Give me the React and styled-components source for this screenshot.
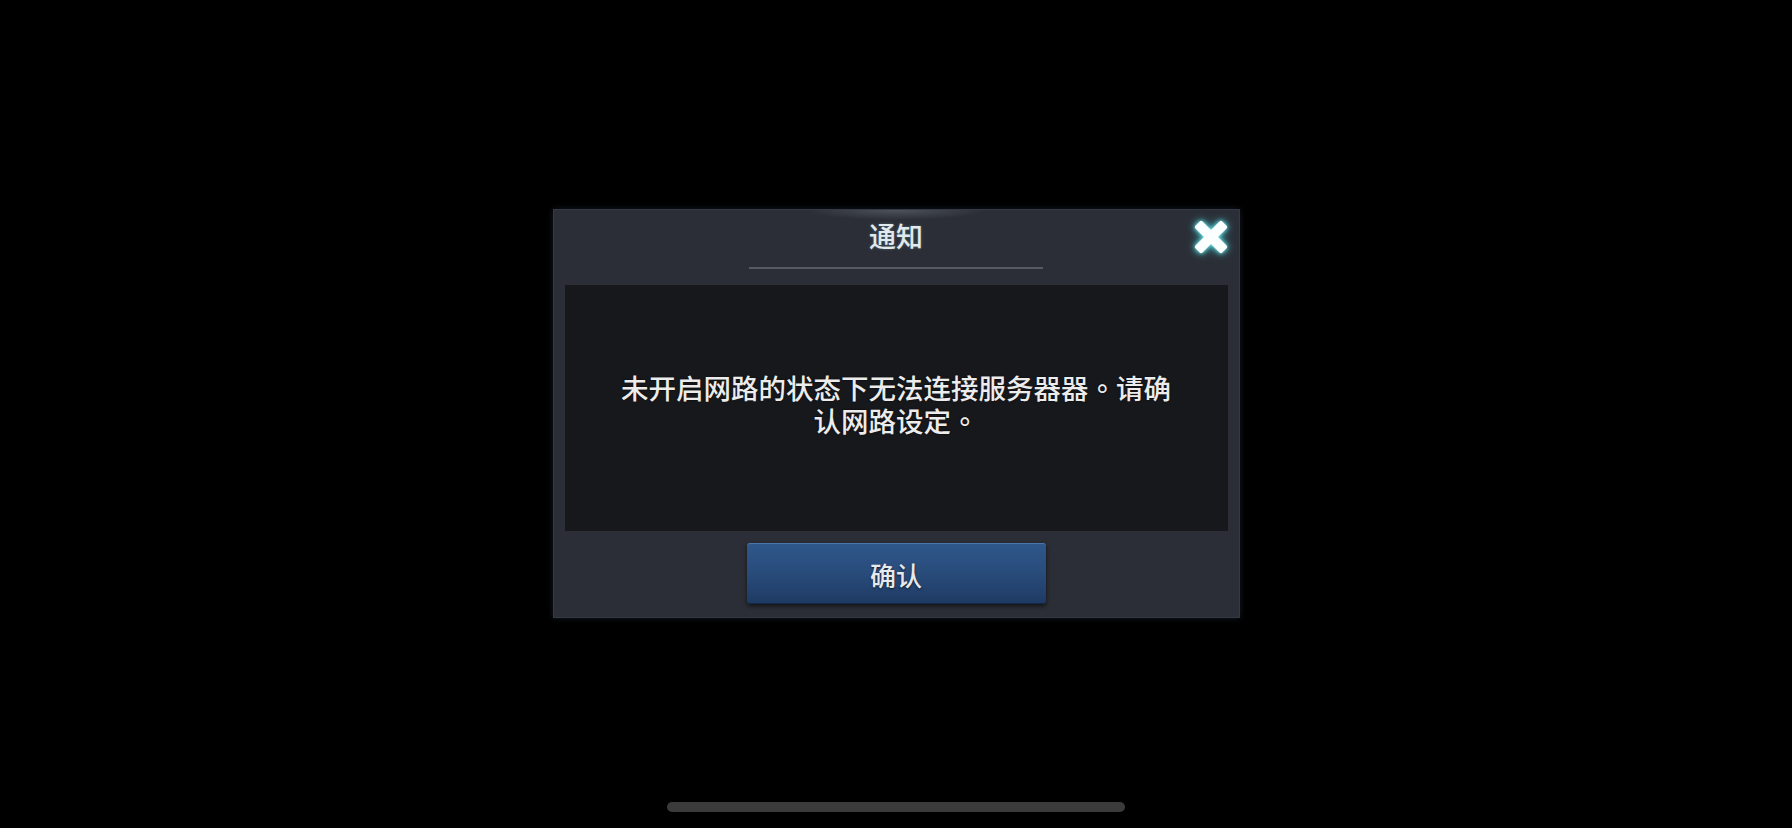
import React from "react";
import styled, { createGlobalStyle } from "styled-components";

const GlobalStyle = createGlobalStyle`
  html, body {
    margin: 0;
    padding: 0;
    background: #000;
  }
  body {
    font-family: "Noto Sans CJK SC", "Noto Sans", sans-serif;
  }
`;

const Screen = styled.div`
  width: 1792px;
  height: 828px;
  background: #000;
  display: flex;
  flex-direction: column;
  align-items: center;
  padding-top: 209px;
  box-sizing: border-box;
`;

const Dialog = styled.div`
  position: relative;
  width: 687px;
  height: 409px;
  box-sizing: border-box;
  display: flex;
  flex-direction: column;
  align-items: center;
  background:
    radial-gradient(ellipse 90px 10px at 50% 0, rgba(200, 210, 225, 0.22), transparent),
    #2b2e36;
  border: 1px solid #353943;
  box-shadow: 0 0 6px rgba(40, 50, 70, 0.5);
`;

const Header = styled.div`
  width: 100%;
  height: 75px;
  display: flex;
  flex-direction: column;
  align-items: center;
  padding-top: 7px;
  box-sizing: border-box;
`;

const Title = styled.div`
  font-size: 27px;
  line-height: 37px;
  font-weight: 500;
  color: #e2e9ec;
  text-shadow: 0 0 3px rgba(150, 210, 220, 0.35);
`;

const Divider = styled.div`
  width: 294px;
  height: 2px;
  margin-top: 13px;
  background: #555a63;
`;

const CloseButton = styled.button`
  position: absolute;
  top: 7px;
  right: 8px;
  width: 40px;
  height: 40px;
  padding: 0;
  border: none;
  background: transparent;
  cursor: pointer;
  filter: drop-shadow(0 0 2px #7ff4f4) drop-shadow(0 0 4px rgba(60, 200, 210, 0.8));
`;

const Panel = styled.div`
  align-self: stretch;
  margin: 0 11px;
  height: 246px;
  box-sizing: border-box;
  padding-bottom: 8px;
  background: #17181c;
  display: flex;
  align-items: center;
  justify-content: center;
`;

const Message = styled.p`
  margin: 0;
  white-space: nowrap;
  text-align: center;
  font-family: "Noto Sans CJK TC", "Noto Sans CJK SC", sans-serif;
  font-size: 27.5px;
  line-height: 33px;
  font-weight: 500;
  color: #ececec;
  text-shadow: 0 0 2px rgba(0, 0, 0, 0.8);
`;

const ConfirmButton = styled.button`
  margin-top: 12px;
  width: 299px;
  height: 61px;
  border: none;
  border-top: 1px solid #4c76ab;
  border-radius: 3px;
  background: linear-gradient(to bottom, #2f578a 0%, #284b7a 50%, #1e3a63 100%);
  box-shadow: 0 2px 4px rgba(0, 0, 0, 0.6), inset 0 -1px 0 rgba(0, 0, 0, 0.3);
  font-family: "Noto Sans CJK SC", "Noto Sans", sans-serif;
  font-size: 26px;
  font-weight: 500;
  color: #e6e8ec;
  text-shadow: 0 1px 2px rgba(0, 0, 0, 0.7);
  cursor: pointer;
`;

const HomeBar = styled.div`
  margin-top: 184px;
  width: 458px;
  height: 10px;
  border-radius: 5px;
  background: #3b3b3b;
`;

const CloseIcon = () => (
  <svg width="40" height="40" viewBox="0 0 40 40">
    <g transform="rotate(45 20 20)" fill="#fbffff">
      <rect x="15" y="1" width="10" height="38" rx="2" />
      <rect x="1" y="15" width="38" height="10" rx="2" />
    </g>
  </svg>
);

export default function App() {
  return (
    <>
      <GlobalStyle />
      <Screen>
        <Dialog>
          <Header>
            <Title>通知</Title>
            <Divider />
          </Header>
          <CloseButton aria-label="关闭">
            <CloseIcon />
          </CloseButton>
          <Panel>
            <Message>
              未开启网路的状态下无法连接服务器器。请确
              <br />
              认网路设定。
            </Message>
          </Panel>
          <ConfirmButton>确认</ConfirmButton>
        </Dialog>
        <HomeBar />
      </Screen>
    </>
  );
}
